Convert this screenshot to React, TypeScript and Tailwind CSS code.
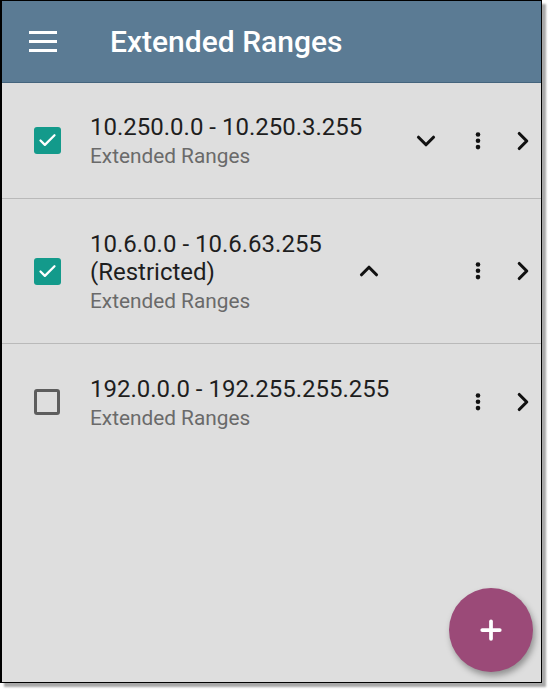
import { ChevronDown, ChevronUp, ChevronRight, Plus, Check } from "lucide-react";

type Range = {
  id: number;
  title: string[];
  checked: boolean;
  expand?: "down" | "up";
  expandGap?: string;
  height: string;
  last?: boolean;
};

const ranges: Range[] = [
  { id: 1, title: ["10.250.0.0 - 10.250.3.255"], checked: true, expand: "down", expandGap: "ml-[44px]", height: "h-[116px]" },
  { id: 2, title: ["10.6.0.0 - 10.6.63.255", "(Restricted)"], checked: true, expand: "up", expandGap: "ml-[27px]", height: "h-[145px]" },
  { id: 3, title: ["192.0.0.0 - 192.255.255.255"], checked: false, height: "h-[116px]", last: true },
];

function Checkbox({ checked }: { checked: boolean }) {
  if (checked) {
    return (
      <div className="flex h-[27px] w-[27px] items-center justify-center rounded-[3px] bg-[#139a8b]">
        <Check size={21} strokeWidth={2.6} className="text-white" />
      </div>
    );
  }
  return <div className="h-[26px] w-[26px] rounded-[3px] border-[3px] border-[#5d5d5d]" />;
}

function Dots() {
  return (
    <svg width="6" height="20" viewBox="0 0 6 20" className="text-[#111]">
      <circle cx="3" cy="3.5" r="2.3" fill="currentColor" />
      <circle cx="3" cy="9.8" r="2.3" fill="currentColor" />
      <circle cx="3" cy="16.1" r="2.3" fill="currentColor" />
    </svg>
  );
}

function RangeRow({ r }: { r: Range }) {
  return (
    <div className={`flex flex-none items-center ${r.last ? "" : "border-b border-[#b9b9b9]"} ${r.height}`}>
      <div className="flex w-[88px] flex-none pl-[32px]">
        <Checkbox checked={r.checked} />
      </div>
      <div className="flex flex-1 items-center">
        <div className="flex-none pt-[4px]">
          {r.title.map((t) => (
            <div key={t} className="text-[24px] leading-[28px] text-[#1e1e1e]">
              {t}
            </div>
          ))}
          <div className="text-[20.8px] leading-[31px] text-[#6a6a6a]">Extended Ranges</div>
        </div>
        {r.expand && (
          <div className={`flex w-[40px] justify-center ${r.expandGap}`}>
            {r.expand === "down" ? (
              <ChevronDown size={30} strokeWidth={2.5} className="text-[#111]" />
            ) : (
              <ChevronUp size={30} strokeWidth={2.5} className="text-[#111]" />
            )}
          </div>
        )}
      </div>
      <div className="mr-[7px] flex w-[40px] justify-center">
        <Dots />
      </div>
      <div className="flex w-[36px] justify-center">
        <ChevronRight size={30} strokeWidth={2.5} className="text-[#111]" />
      </div>
    </div>
  );
}

export default function App() {
  return (
    <div className="h-[691px] w-[549px] bg-white" style={{ fontFamily: "Roboto, 'Noto Sans', sans-serif" }}>
      <div className="relative flex h-[683px] w-[542px] flex-col overflow-hidden border border-l-2 border-black bg-[#dedede] shadow-[4px_4px_2px_#a8a8a8]">
        <div className="flex h-[82px] flex-none items-center border-b border-[#44647d] bg-[#5b7b94]">
          <div className="ml-[27px] flex w-[28px] flex-col gap-[6px]">
            <div className="h-[3px] bg-white" />
            <div className="h-[3px] bg-white" />
            <div className="h-[3px] bg-white" />
          </div>
          <div className="ml-[53px] text-[30px] font-medium text-white">Extended Ranges</div>
        </div>
        {ranges.map((r) => (
          <RangeRow key={r.id} r={r} />
        ))}
        <div className="absolute bottom-[10px] right-[8px] flex h-[84px] w-[84px] items-center justify-center rounded-full bg-[#9b4a78] shadow-[2px_4px_6px_rgba(0,0,0,0.35)]">
          <Plus size={30} strokeWidth={3} className="text-white" />
        </div>
      </div>
    </div>
  );
}
